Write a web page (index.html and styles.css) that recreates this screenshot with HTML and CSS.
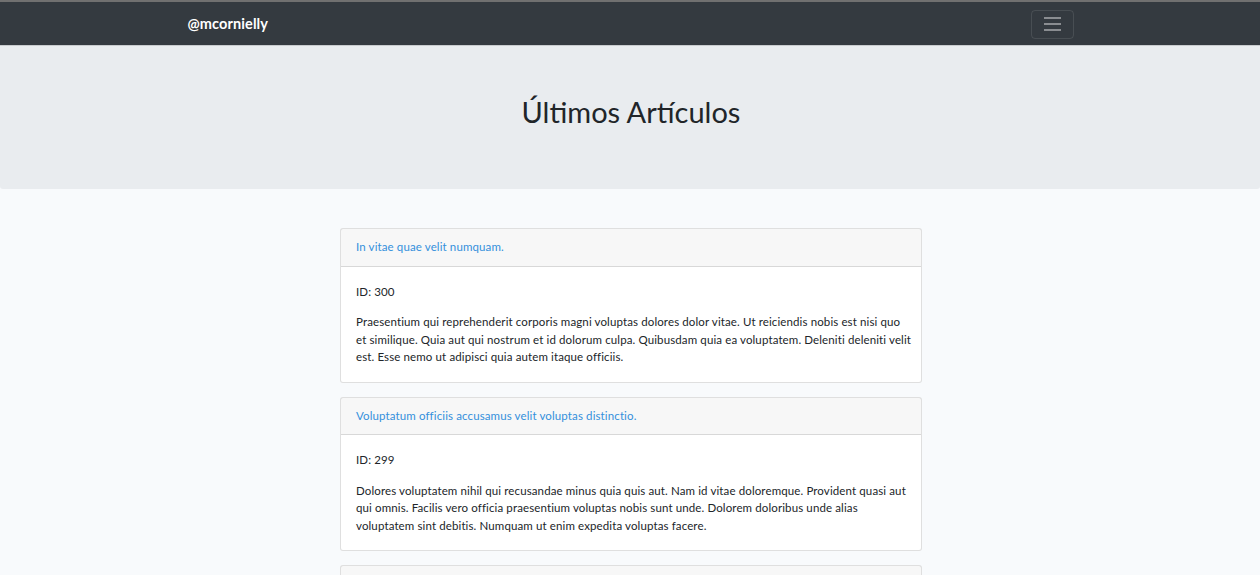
FILE: index.html
```html
<!DOCTYPE html>
<html lang="es">
<head>
<meta charset="utf-8">
<title>Últimos Artículos</title>
<link rel="stylesheet" href="styles.css">
</head>
<body>
<div class="topline"></div>
<nav class="navbar">
  <div class="nav-inner">
    <a class="brand" href="#">@mcornielly</a>
    <button class="toggler" type="button" aria-label="Menu">
      <span></span><span></span><span></span>
    </button>
  </div>
</nav>
<header class="jumbotron">
  <h1>Últimos Artículos</h1>
</header>
<main class="list">
  <article class="card">
    <div class="card-header"><a href="#">In vitae quae velit numquam.</a></div>
    <div class="card-body">
      <p>ID: 300</p>
      <p>Praesentium qui reprehenderit corporis magni voluptas dolores dolor vitae. Ut reiciendis nobis est nisi quo et similique. Quia aut qui nostrum et id dolorum culpa. Quibusdam quia ea voluptatem. Deleniti deleniti velit est. Esse nemo ut adipisci quia autem itaque officiis.</p>
    </div>
  </article>
  <article class="card">
    <div class="card-header"><a href="#">Voluptatum officiis accusamus velit voluptas distinctio.</a></div>
    <div class="card-body">
      <p>ID: 299</p>
      <p>Dolores voluptatem nihil qui recusandae minus quia quis aut. Nam id vitae doloremque. Provident quasi aut qui omnis. Facilis vero officia praesentium voluptas nobis sunt unde. Dolorem doloribus unde alias voluptatem sint debitis. Numquam ut enim expedita voluptas facere.</p>
    </div>
  </article>
  <article class="card">
    <div class="card-header"><a href="#">Et dolorem quia sit.</a></div>
    <div class="card-body">
      <p>ID: 298</p>
      <p>Quae sit ut quisquam voluptates. Eos porro ut qui aut.</p>
    </div>
  </article>
</main>
</body>
</html>
```

FILE: styles.css
```css
html, body {
  margin: 0;
  padding: 0;
}
body {
  background: #f8fafc;
  font-family: "Lato", "Noto Sans", sans-serif;
  font-size: 11.5px;
  letter-spacing: 0.12px;
  line-height: 17.5px;
  color: #212529;
  overflow: hidden;
}
.topline {
  height: 2px;
  background: #707070;
}
.navbar {
  height: 43px;
  background: #343a40;
  border-bottom: 1px solid #c8cbce;
}
.nav-inner {
  width: 887px;
  margin: 0 auto;
  height: 100%;
  display: flex;
  align-items: center;
  justify-content: space-between;
}
.brand {
  color: #fff;
  text-decoration: none;
  font-size: 14.5px;
  font-weight: 700;
  letter-spacing: 0.1px;
  margin-left: 1px;
}
.toggler {
  width: 43px;
  height: 29px;
  margin-top: 1px;
  background: transparent;
  border: 1px solid rgba(255,255,255,0.1);
  border-radius: 4px;
  display: flex;
  flex-direction: column;
  align-items: center;
  justify-content: center;
  gap: 4px;
  padding: 0;
}
.toggler span {
  display: block;
  width: 17px;
  height: 2px;
  background: #8a8d91;
}
.jumbotron {
  height: 143px;
  background: #e9ecef;
  border-radius: 0 0 3px 3px;
  display: flex;
  align-items: center;
  justify-content: center;
}
.jumbotron h1 {
  margin: 0;
  font-size: 29px;
  font-weight: 400;
  letter-spacing: 0;
  color: #212529;
  line-height: 1.2;
  padding-bottom: 10px;
  padding-left: 2px;
}
.list {
  width: 582px;
  margin: 39px auto 0;
  padding-left: 2px;
  display: flex;
  flex-direction: column;
  gap: 14px;
}
.card {
  background: #fff;
  border: 1px solid rgba(0,0,0,0.125);
  border-radius: 3px;
}
.card-header {
  background: rgba(0,0,0,0.03);
  border-bottom: 1px solid rgba(0,0,0,0.125);
  padding: 9px 15px 10px;
}
.card-header a {
  color: #3490dc;
  text-decoration: none;
}
.card-body {
  padding: 16px 9px 16px 15px;
}
.card-body p {
  margin: 0 0 13px;
}
.card-body p:last-child {
  margin-bottom: 0;
}
```
